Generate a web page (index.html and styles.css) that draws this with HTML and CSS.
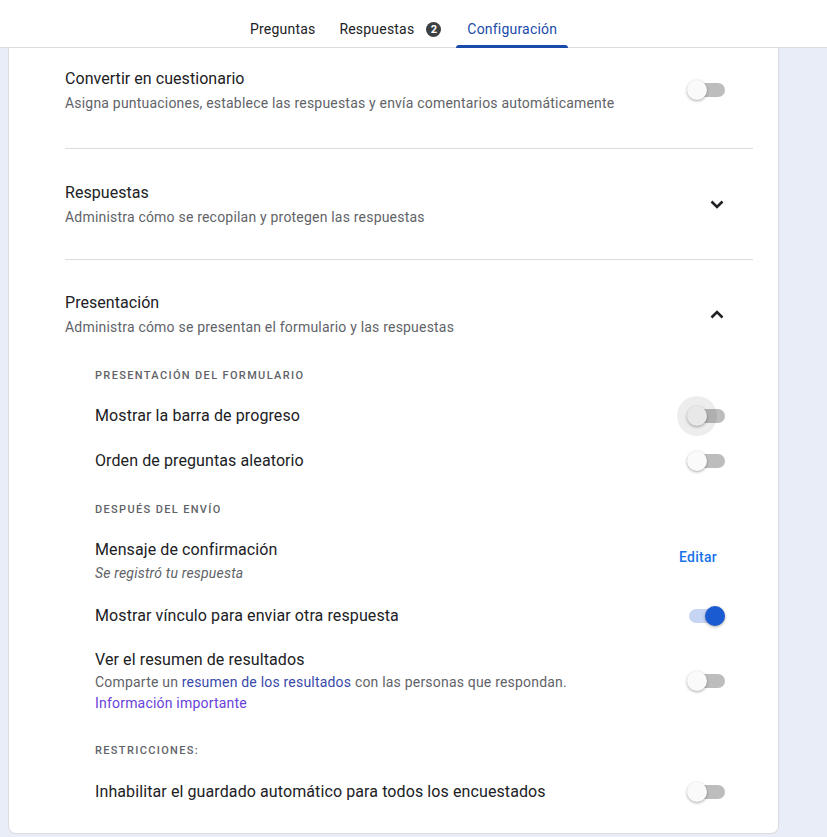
FILE: index.html
```html
<!DOCTYPE html>
<html lang="es">
<head>
<meta charset="utf-8">
<title>Configuración</title>
<link rel="stylesheet" href="styles.css">
</head>
<body>
<header class="topbar">
  <nav class="tabs">
    <a class="tab t1">Preguntas</a>
    <a class="tab t2">Respuestas <span class="badge">2</span></a>
    <a class="tab active">Configuración</a>
  </nav>
</header>
<main class="card">
  <section class="section first">
    <div class="text">
      <div class="title">Convertir en cuestionario</div>
      <div class="subtitle">Asigna puntuaciones, establece las respuestas y envía comentarios automáticamente</div>
    </div>
    <span class="switch"><span class="thumb"></span></span>
  </section>
  <section class="section">
    <div class="text">
      <div class="title">Respuestas</div>
      <div class="subtitle">Administra cómo se recopilan y protegen las respuestas</div>
    </div>
    <svg class="chev" width="14" height="9" viewBox="0 0 14 9"><path d="M1.5 1.5 L7 7 L12.5 1.5" fill="none" stroke="#202124" stroke-width="2.6"/></svg>
  </section>
  <section class="section last">
    <div class="sechead">
      <div class="text">
        <div class="title">Presentación</div>
        <div class="subtitle">Administra cómo se presentan el formulario y las respuestas</div>
      </div>
      <svg class="chev" width="14" height="9" viewBox="0 0 14 9"><path d="M1.5 7.5 L7 2 L12.5 7.5" fill="none" stroke="#202124" stroke-width="2.6"/></svg>
    </div>
    <div class="sub">
      <div class="subhead h1">Presentación del formulario</div>
      <div class="row r1"><span class="label">Mostrar la barra de progreso</span><span class="switch hover"><span class="thumb"></span></span></div>
      <div class="row r2"><span class="label">Orden de preguntas aleatorio</span><span class="switch"><span class="thumb"></span></span></div>
      <div class="subhead h2">Después del envío</div>
      <div class="row multi r3">
        <div class="text">
          <div class="label">Mensaje de confirmación</div>
          <div class="note">Se registró tu respuesta</div>
        </div>
        <a class="edit">Editar</a>
      </div>
      <div class="row r4"><span class="label">Mostrar vínculo para enviar otra respuesta</span><span class="switch on"><span class="thumb"></span></span></div>
      <div class="row multi r5">
        <div class="text">
          <div class="label">Ver el resumen de resultados</div>
          <div class="desc">Comparte un <a class="link">resumen de los resultados</a> con las personas que respondan.</div>
          <div class="desc"><a class="link info">Información importante</a></div>
        </div>
        <span class="switch"><span class="thumb"></span></span>
      </div>
      <div class="subhead h3">Restricciones:</div>
      <div class="row r6"><span class="label">Inhabilitar el guardado automático para todos los encuestados</span><span class="switch"><span class="thumb"></span></span></div>
    </div>
  </section>
</main>
</body>
</html>
```
FILE: styles.css
```css
* { box-sizing: border-box; }
html, body { margin: 0; padding: 0; }
body {
  background: #e8edf8;
  font-family: Roboto, "Noto Sans", Arial, sans-serif;
  color: #202124;
  height: 837px;
  overflow: hidden;
}
.topbar {
  height: 48px;
  background: #fff;
  border-bottom: 1px solid #dadce0;
  display: flex;
  align-items: flex-end;
}
.tabs {
  display: flex;
  margin-left: 239px;
  height: 47px;
}
.tab {
  display: flex;
  align-items: center;
  gap: 12px;
  padding: 11px 11px 0;
  font-size: 14px;
  font-weight: 400;
  letter-spacing: 0.2px;
  color: #202124;
  height: 100%;
  position: relative;
}
.t1 { margin-right: 2px; }
.t2 { margin-right: 4px; }
.tab.active { color: #1a4bab; }
.tab.active::after {
  content: "";
  position: absolute;
  left: 0; right: 0; bottom: -1px;
  height: 3px;
  background: #1a4bab;
  border-radius: 3px 3px 0 0;
}
.badge {
  display: inline-flex;
  align-items: center;
  justify-content: center;
  width: 15px; height: 15px;
  border-radius: 50%;
  background: #3c4043;
  color: #fff;
  font-size: 11px;
  font-weight: 700;
  letter-spacing: 0;
}
.card {
  margin-left: 8px;
  width: 771px;
  background: #fff;
  border: 1px solid #dadce0;
  border-top: none;
  border-radius: 0 0 8px 8px;
  padding: 0 25px 21px 56px;
}
.section {
  display: flex;
  align-items: center;
  padding: 32px 0;
  border-bottom: 1px solid #dadce0;
}
.section.first { padding: 19px 0 35px; }
.section.last { display: block; border-bottom: none; padding: 31px 0 0; }
.sechead { display: flex; align-items: center; }
.text { flex: 1; }
.title { font-size: 16px; line-height: 24px; letter-spacing: 0.05px; }
.subtitle { font-size: 14px; line-height: 20px; margin-top: 2px; color: #5f6368; letter-spacing: 0.2px; }
.chev { margin-right: 29px; }
.switch {
  position: relative;
  width: 36px;
  height: 14px;
  border-radius: 7px;
  background: #bdbdbd;
  margin-right: 28px;
  flex: none;
}
.thumb {
  position: absolute;
  left: -2px; top: -3px;
  width: 20px; height: 20px;
  border-radius: 50%;
  background: #fafafa;
  box-shadow: 0 1px 3px rgba(0,0,0,.35);
}
.switch.hover .thumb::before {
  content: "";
  position: absolute;
  left: -10px; top: -10px;
  width: 40px; height: 40px;
  border-radius: 50%;
  background: rgba(0,0,0,.07);
}
.switch.on { background: #c6d5f3; }
.switch.on .thumb { left: 16px; background: #1b5bd2; }
.sub { padding-left: 30px; display: flex; flex-direction: column; }
.subhead {
  font-size: 11px;
  line-height: 16px;
  font-weight: 500;
  letter-spacing: 1.35px;
  text-transform: uppercase;
  color: #5f6368;
}
.h1 { margin-top: 31px; }
.h2 { margin-top: 21px; }
.h3 { margin-top: 30px; }
.row { display: flex; align-items: center; min-height: 40px; }
.row .label { flex: 1; font-size: 16px; line-height: 24px; letter-spacing: 0.1px; }
.row.multi .label { flex: none; }
.r1 { margin-top: 12px; }
.r2 { margin-top: 5px; }
.r3 { margin-top: 20px; }
.r4 { margin-top: 13px; }
.r5 { margin-top: 12px; }
.r6 { margin-top: 13px; }
.note { font-size: 14px; line-height: 20px; font-style: italic; color: #5f6368; margin-top: 1px; letter-spacing: 0.2px; }
.desc { font-size: 14px; line-height: 20px; color: #5f6368; letter-spacing: 0.2px; }
.desc + .desc { margin-top: 1px; }
.link { color: #3949ab; }
.link.info { color: #6741d9; }
.edit {
  font-size: 14px;
  font-weight: 500;
  letter-spacing: 0.25px;
  color: #1a73e8;
  margin-right: 36px;
  margin-bottom: 8px;
}
```
